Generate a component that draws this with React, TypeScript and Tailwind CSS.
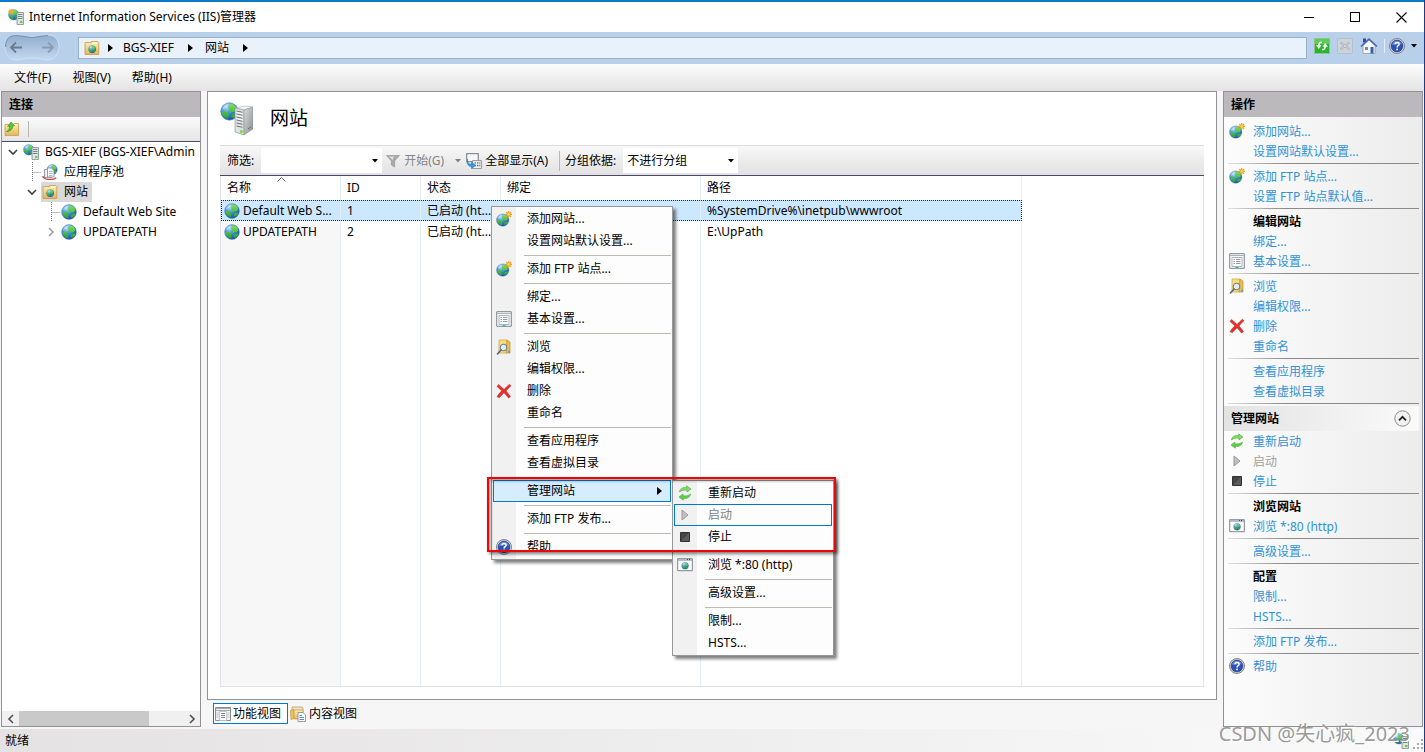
import type { ReactNode } from "react";

/* ---------- icons ---------- */

function Defs() {
  return (
    <svg width="0" height="0" className="absolute" aria-hidden="true">
      <defs>
        <radialGradient id="sea" cx="0.35" cy="0.25" r="0.85">
          <stop offset="0" stopColor="#b5dcfc" />
          <stop offset="0.4" stopColor="#4a90e2" />
          <stop offset="1" stopColor="#123f9c" />
        </radialGradient>
        <linearGradient id="land" x1="0" y1="0" x2="0" y2="1">
          <stop offset="0" stopColor="#7fe05c" />
          <stop offset="1" stopColor="#22a52e" />
        </linearGradient>
        <linearGradient id="folder" x1="0" y1="0" x2="0" y2="1">
          <stop offset="0" stopColor="#fdf0b4" />
          <stop offset="1" stopColor="#e3b65a" />
        </linearGradient>
        <linearGradient id="metal" x1="0" y1="0" x2="1" y2="1">
          <stop offset="0" stopColor="#d6d9d9" />
          <stop offset="1" stopColor="#8b9292" />
        </linearGradient>
        <linearGradient id="pill" x1="0" y1="0" x2="0" y2="1">
          <stop offset="0" stopColor="#92aecb" />
          <stop offset="0.5" stopColor="#a9c2de" />
          <stop offset="1" stopColor="#c6daf0" />
        </linearGradient>
      </defs>
    </svg>
  );
}

function GlobeShape() {
  return (
    <>
      <circle cx="8" cy="8" r="7.4" fill="url(#sea)" stroke="#5f86b8" strokeWidth="0.5" />
      <path
        d="M8 1.300c2.600 0 4.600 1.200 5.800 3.200l.2 2.300-1.600 1.800-2.200-.4L9 9.300 7.200 8.200l.4-2.400L6.600 4l1.600-1zM1.300 8.400l2.600-1 2.400 1.800 1.300 2.400-.8 2.600-2.400-.8C2.600 12.200 1.500 10.400 1.300 8.400zM10 10.800l3.200-1.200 1.200.6c-.6 1.500-1.600 2.800-3 3.600L9.600 13z"
        fill="url(#land)"
      />
      <path d="M2 6.500C2.500 3.500 5 1.500 8 1.500c-1 2-3 4-6 5z" fill="#fff" opacity="0.350" />
    </>
  );
}

function Globe() {
  return (
    <svg width="16" height="16" viewBox="0 0 16 16">
      <GlobeShape />
    </svg>
  );
}

function GlobeNew() {
  return (
    <svg width="16" height="16" viewBox="0 0 16 16">
      <g transform="translate(0 2.4) scale(0.84)">
        <GlobeShape />
      </g>
      <path d="M12.7 0v6.8M9.3 3.4h6.8M10.3 1l4.8 4.8M15.1 1l-4.8 4.8" stroke="#f0a020" strokeWidth="1.2" />
      <circle cx="12.7" cy="3.4" r="1.3" fill="#ffd34d" />
    </svg>
  );
}

function ServerLarge() {
  return (
    <svg width="33" height="33" viewBox="0 0 33 33">
      <g transform="scale(1.180)">
        <GlobeShape />
      </g>
      <path d="m15 6 10-2 8 1-9 3z" fill="#f4f5f5" stroke="#9aa0a0" strokeWidth="0.5" />
      <path d="m15 6 9 2v25l-9-3z" fill="#dfe2e2" stroke="#868d8d" strokeWidth="0.6" />
      <path d="m24 8 9-3v22l-9 6z" fill="url(#metal)" stroke="#868d8d" strokeWidth="0.5" />
      <path d="m16.500 9 6 1.300M16.500 12l6 1.300M16.500 15l6 1.300M16.500 18l6 1.300M16.500 21l6 1.300M16.500 24l6 1.300" stroke="#6d7474" strokeWidth="1" />
      <path d="m16.500 10.500 6 1.300M16.500 13.500l6 1.300M16.500 16.500l6 1.300" stroke="#fff" strokeWidth="0.8" />
      <path d="m28 27 3-2" stroke="#6a7171" />
      <circle cx="21.300" cy="29.600" r="1.500" fill="#6be02c" />
    </svg>
  );
}

function ServerSmall({ star = false }: { star?: boolean }) {
  return (
    <svg width="16" height="16" viewBox="0 0 16 16">
      <g transform="scale(0.720)">
        <GlobeShape />
      </g>
      <path d="M9 3.500h6.500v12H9z" fill="#dfe4e7" stroke="#7f898f" strokeWidth="0.8" />
      <path d="M10 5.500h4.500M10 7.500h4.500M10 9.500h4.500" stroke="#6c7880" strokeWidth="0.9" />
      <path d="M12 13h2.500" stroke="#55cf2a" strokeWidth="1.800" />
      {star && (
        <path d="M3 0v5.500M.2 2.800h5.600M1 .8l4 4M5 .8l-4 4" stroke="#f3a81f" strokeWidth="1.100" />
      )}
    </svg>
  );
}

function FolderGlobe() {
  return (
    <svg width="16" height="16" viewBox="0 0 16 16">
      <path d="M1 2.500h6.500V1.500H14l.8 1v12H1z" fill="url(#folder)" stroke="#c79a45" strokeWidth="0.8" />
      <path d="M9 3.200h4" stroke="#fff" strokeWidth="1" />
      <g transform="translate(4.200 5.200) scale(0.5)">
        <GlobeShape />
      </g>
    </svg>
  );
}

function FolderUp() {
  return (
    <svg width="16" height="16" viewBox="0 0 16 16">
      <path d="M1 3.500h8l1-1h4.500v12H1z" fill="url(#folder)" stroke="#c9a046" strokeWidth="0.8" />
      <path d="M2.500 10.500C4.500 9.500 5.500 8 5.600 5.200L3.600 5.400 7 1l3.600 3.800-1.900.1C8.500 8.500 6.500 10.500 2.500 10.500z" fill="#56c836" stroke="#2d8c1e" strokeWidth="0.6" />
    </svg>
  );
}

function AppPool() {
  return (
    <svg width="16" height="16" viewBox="0 0 16 16">
      <g transform="translate(4.500 0) scale(0.7)">
        <GlobeShape />
      </g>
      <path d="M2.500 5.500h7v8h-7z" fill="#eef2f6" stroke="#7d8b99" strokeWidth="0.8" />
      <path d="M5.500 4h4l2.500 2.500V13H5.500z" fill="#fff" stroke="#7d8b99" strokeWidth="0.8" />
      <path d="M7 7.500h3.500M7 9.500h3.500M7 11.500h3.500" stroke="#91a3b5" strokeWidth="0.8" />
      <path d="M.8 12c.6 4 10 4.400 13.400 1.800" fill="none" stroke="#c4473f" strokeWidth="1.400" />
    </svg>
  );
}

function SettingsSheet() {
  return (
    <svg width="16" height="16" viewBox="0 0 16 16">
      <path d="M.7.7h14.600v14.600H.7z" fill="#f7f8f9" stroke="#7e868d" />
      <path d="M1.200 2.500h13.600" stroke="#aab1b7" />
      <path d="M3 4.500h10v9H3z" fill="#fff" stroke="#9ba3aa" strokeWidth="0.8" />
      <path d="M4.500 6.500h1.500M7 6.500h4.500M4.500 8.500h1.500M7 8.500h4.500M4.500 10.500h1.500M7 10.500h4.500" stroke="#8a939b" strokeWidth="0.9" />
      <path d="M6.500 14.500h3" stroke="#28b6d8" strokeWidth="1.200" />
    </svg>
  );
}

function FolderSearch() {
  return (
    <svg width="16" height="16" viewBox="0 0 16 16">
      <path d="M3 1h8v13H3z" fill="#f6dc7e" stroke="#cfa53c" strokeWidth="0.7" />
      <path d="m11 1 3 2v11h-4z" fill="#e9be4d" stroke="#c1922a" strokeWidth="0.7" />
      <path d="M13 11.500v2.500" stroke="#3a9fe0" strokeWidth="1.200" />
      <circle cx="7.500" cy="8.500" r="3.200" fill="#dcedf9" stroke="#75818c" strokeWidth="1.100" />
      <path d="M5 11 1.500 15" stroke="#5c6873" strokeWidth="1.600" strokeLinecap="round" />
    </svg>
  );
}

function DeleteCross() {
  return (
    <svg width="16" height="16" viewBox="0 0 16 16">
      <path
        d="M2.500 1.500C5 3.500 6.500 5 8 6.400 9.800 4.500 11.500 2.800 13.500 1.200l1.500 1.600c-2 1.600-3.600 3.400-5 5.200 1.800 2 3.300 3.800 4.500 5.600l-2 1.400C11 13 9.600 11.400 8 9.800c-1.600 1.800-3.200 3.500-4.800 5L1 13.600c1.400-2 3-4 4.800-5.800C4 6.200 2.500 4.800 1 3.400z"
        fill="#e5322e"
        stroke="#b51f1b"
        strokeWidth="0.5"
      />
    </svg>
  );
}

function Recycle() {
  return (
    <svg width="16" height="16" viewBox="0 0 16 16">
      <path d="M2.500 7C2.800 3.600 6 2 9.800 2.600L9.600.8 14 4l-4 3V5.200C7 4.800 4.500 5.200 2.500 7z" fill="#7fdc66" stroke="#45ad35" strokeWidth="0.6" />
      <path d="M13.500 9c-.3 3.400-3.500 5-7.300 4.400l.2 1.800L2 12l4-3v1.800c3 .4 5.500 0 7.500-1.800z" fill="#62cc4a" stroke="#45ad35" strokeWidth="0.6" />
    </svg>
  );
}

function StartIcon() {
  return (
    <svg width="16" height="16" viewBox="0 0 16 16">
      <path d="M5 3v10l6-5z" fill="#c0c0c0" stroke="#989898" />
    </svg>
  );
}

function StopIcon() {
  return (
    <svg width="16" height="16" viewBox="0 0 16 16">
      <path d="M3.500 3.500h9v9h-9z" fill="#454545" stroke="#303030" />
      <path d="M4 12 12 4v8z" fill="#5c5c5c" />
    </svg>
  );
}

function BrowseWindow() {
  return (
    <svg width="16" height="16" viewBox="0 0 16 16">
      <path d="M.7 1.700h14.600v12H.7z" fill="#fcfcfd" stroke="#7d8590" />
      <path d="M1 3h14" stroke="#9fb0c6" strokeWidth="1.600" />
      <path d="M10 2.500h1M12 2.500h1" stroke="#3c4c63" />
      <g transform="translate(4.300 5) scale(0.47)">
        <GlobeShape />
      </g>
    </svg>
  );
}

function HelpIcon() {
  return (
    <svg width="16" height="16" viewBox="0 0 16 16">
      <circle cx="8" cy="8" r="7.500" fill="#d7d9dd" stroke="#777b84" strokeWidth="0.9" />
      <circle cx="8" cy="8" r="5.900" fill="#2a52b8" stroke="#14307c" strokeWidth="0.6" />
      <path d="M3 6.500a5.200 5.200 0 0 1 10 0C10 5.600 6 7.500 3 6.500z" fill="#7f9fe4" opacity="0.7" />
      <path d="M6 6.300c.1-2.600 4.200-2.400 4.100-.1C10.100 7.700 8.100 7.700 8.100 9.400" fill="none" stroke="#fff" strokeWidth="1.500" />
      <circle cx="8.100" cy="11.400" r="0.950" fill="#fff" />
    </svg>
  );
}

function RefreshIcon() {
  return (
    <svg width="16" height="16" viewBox="0 0 16 16">
      <path d="M.5.5h15v15H.5z" fill="#28b52c" stroke="#8fc08f" />
      <path d="M1 1h14v5H1z" fill="#7fdc72" opacity="0.6" />
      <path d="M8 4.500C6 4 4.800 5 4.800 8M8 11.500c2 .5 3.200-.5 3.200-3.500" fill="none" stroke="#fff" strokeWidth="1.600" />
      <path d="M2 7.300h5.500L4.800 11zM14 8.700H8.500L11.200 5z" fill="#fff" />
    </svg>
  );
}

function CancelIcon() {
  return (
    <svg width="16" height="16" viewBox="0 0 16 16">
      <path d="M.5.500h15v15H.5z" fill="#ccd3da" stroke="#b6c0ca" />
      <path d="m3.500 4.500 9 7M12.500 4.500l-9 7" stroke="#9aa5b0" strokeWidth="2" />
      <path d="m3.500 4.500 9 7M12.500 4.500l-9 7" stroke="#e6eaee" strokeWidth="0.8" />
    </svg>
  );
}

function HomeIcon() {
  return (
    <svg width="18" height="18" viewBox="0 0 18 18">
      <path d="M3 1.500h3v4H3z" fill="#2a49c4" />
      <path d="M3 8.500 9 3l6 5.500V16.500H3z" fill="#f4f5f7" stroke="#8b919b" strokeWidth="0.7" />
      <path d="M1 9.500 9 2l8 7.500" fill="none" stroke="#4b63a8" strokeWidth="1.600" />
      <path d="M5 10h3v3H5z" fill="#7d8796" />
      <path d="M10.500 10h3v6.500h-3z" fill="#2f62b8" />
    </svg>
  );
}

function FunnelIcon() {
  return (
    <svg width="14" height="14" viewBox="0 0 14 14">
      <path d="M.5 1.500h13L8.600 7v6L5.400 11V7z" fill="#a9a9a9" stroke="#9a9a9a" strokeWidth="0.7" />
      <path d="M3 2.500h5L6.500 6z" fill="#dedede" />
    </svg>
  );
}

function ShowAllIcon() {
  return (
    <svg width="16" height="16" viewBox="0 0 16 16">
      <path d="M.7.7h11.600v8H.7z" fill="#f7f7f8" stroke="#8e9298" strokeWidth="1.300" />
      <path d="M6.500 7.500h9v8h-9z" fill="#eceef1" stroke="#8e9298" strokeWidth="0.9" />
      <path d="M8.500 9.800h1.300M11 9.800h1.300M13.300 9.800h1M8.500 12.500h1.300M11 12.500h1.300M13.300 12.500h1" stroke="#5a6270" strokeWidth="1.300" />
      <path d="M1.500 6c0 4 1.500 5.200 4 5.200V9l4 3.400-4 3.300v-2.200C2 13.500.5 10.500 1.500 6z" fill="#2f9be0" stroke="#1b6fac" strokeWidth="0.5" />
    </svg>
  );
}

function FeatureViewIcon() {
  return (
    <svg width="16" height="16" viewBox="0 0 16 16">
      <path d="M.5 1.500h15v13H.5z" fill="#f3f4f5" stroke="#8b8f94" />
      <path d="M1 2.500h14M1 4.500h14" stroke="#a4a8ad" />
      <path d="M1.500 7h2M1.500 9h2M1.500 11h2M12.500 7h2M12.500 9h2M12.500 11h2" stroke="#b4b8bd" />
      <path d="M4.500 5.500h7v9h-7z" fill="#fff" stroke="#b4b8bd" strokeWidth="0.8" />
      <path d="M6 7.500h4M6 9.500h4M6 11.500h4" stroke="#6d737a" strokeWidth="0.9" />
    </svg>
  );
}

function ContentViewIcon() {
  return (
    <svg width="16" height="16" viewBox="0 0 16 16">
      <path d="M2 1h10l1 1v9H2z" fill="#ede3c2" stroke="#a89a6e" strokeWidth="0.7" />
      <path d="M.5 4.500 4 3.500v9l-3 1z" fill="#f1c35d" stroke="#c39439" strokeWidth="0.7" />
      <path d="M4 4h9v9H4z" fill="url(#folder)" stroke="#c79a45" strokeWidth="0.7" />
      <path d="M8 6.500h5l2.500 2.500v6.500H8z" fill="#fff" stroke="#7b8794" strokeWidth="0.8" />
      <path d="M9.500 9.500H12M9.500 11.500H14M9.500 13.500H14" stroke="#3f7fc9" strokeWidth="0.9" />
    </svg>
  );
}

function Arrow({ dir, className = "" }: { dir: "right" | "down"; className?: string }) {
  return dir === "right" ? (
    <svg width="5" height="8" viewBox="0 0 5 8" className={className}>
      <path d="M0 0v8l5-4z" fill="currentColor" />
    </svg>
  ) : (
    <svg width="6" height="4" viewBox="0 0 6 4" className={className}>
      <path d="M0 0h6L3 3.500z" fill="currentColor" />
    </svg>
  );
}

function Chevron({ dir }: { dir: "down" | "left" | "right" }) {
  const paths = { down: "m1 3 4 4 4-4", left: "M7 1 3 5l4 4", right: "m3 1 4 4-4 4" };
  return (
    <svg width="10" height="10" viewBox="0 0 10 10">
      <path d={paths[dir]} fill="none" stroke="currentColor" strokeWidth="1.600" />
    </svg>
  );
}

/* ---------- title, address and menu bars ---------- */

function TitleBar() {
  return (
    <header className="flex h-8 items-center border-t-2 border-[#0a7ac8] bg-white pl-2">
      <ServerSmall star />
      <h1 className="ml-[5px] flex-1">Internet Information Services (IIS)管理器</h1>
      <button aria-label="最小化" className="flex h-full w-[46px] items-center justify-center">
        <span className="h-px w-[10px] bg-black" />
      </button>
      <button aria-label="最大化" className="flex h-full w-[46px] items-center justify-center">
        <span className="size-[10px] border border-black" />
      </button>
      <button aria-label="关闭" className="flex h-full w-[46px] items-center justify-center">
        <svg width="11" height="11" viewBox="0 0 11 11">
          <path d="m.5.5 10 10M10.500.5l-10 10" stroke="#000" strokeWidth="1.100" />
        </svg>
      </button>
    </header>
  );
}

function AddressBar() {
  return (
    <nav className="flex h-8 items-center bg-[#b9d0ea] pl-1 pr-[7px]">
      <svg width="56" height="28" viewBox="0 0 56 28" className="shrink-0">
        <path
          d="M12 1c6 0 9 2 16 2s10-2 16-2c7 0 11 5 11 11.500S51 26 44 26c-5 0-9-2-16-2s-11 2-16 2C5 26 1 20 1 13S5 1 12 1z"
          fill="url(#pill)"
          stroke="#d2e1f2"
        />
        <path d="M1.500 13C1.500 6 5 1.500 12 1.500c6 0 9 2 16 2s10-2 16-2" fill="none" stroke="#7894b4" strokeWidth="1.200" />
        <path d="M18 13.500H7M12 8.500 7 13.500l5 5" fill="none" stroke="#6a7c92" strokeWidth="1.800" />
        <path d="M38 13.500h11M44 8.500l5 5-5 5" fill="none" stroke="#8a9cb3" strokeWidth="1.800" />
      </svg>
      <div className="ml-[18px] flex h-[22px] flex-1 items-center border border-[#98b0cc] bg-[#e9f1fb] pl-[5px]">
        <FolderGlobe />
        <Arrow dir="right" className="ml-2" />
        <a href="#server" className="ml-[10px]">BGS-XIEF</a>
        <Arrow dir="right" className="ml-[14px]" />
        <a href="#sites" className="ml-3">网站</a>
        <Arrow dir="right" className="ml-[14px]" />
      </div>
      <div className="flex items-center pb-1 pl-[7px]">
        <button aria-label="刷新"><RefreshIcon /></button>
        <button aria-label="停止加载" className="ml-[7px]"><CancelIcon /></button>
        <button aria-label="主页" className="ml-[7px]"><HomeIcon /></button>
        <span className="ml-[6px] h-[14px] w-px bg-[#e4edf8]" />
        <button aria-label="帮助菜单" className="ml-[4px] flex items-center gap-[6px]">
          <HelpIcon />
          <Arrow dir="down" />
        </button>
      </div>
    </nav>
  );
}

function MenuBar() {
  return (
    <div className="flex h-[27px] items-center gap-[21px] bg-linear-to-b from-[#fdfdfd] to-[#e4e2e2] pl-[14px]">
      {["文件(F)", "视图(V)", "帮助(H)"].map((label) => (
        <button key={label}>{label}</button>
      ))}
    </div>
  );
}

/* ---------- connections tree ---------- */

type TreeNode = {
  label: string;
  icon: ReactNode;
  depth: number;
  state?: "open" | "closed";
  selected?: boolean;
};

const tree: TreeNode[] = [
  { label: "BGS-XIEF (BGS-XIEF\\Admin", icon: <ServerSmall />, depth: 0, state: "open" },
  { label: "应用程序池", icon: <AppPool />, depth: 1 },
  { label: "网站", icon: <FolderGlobe />, depth: 1, state: "open", selected: true },
  { label: "Default Web Site", icon: <Globe />, depth: 2 },
  { label: "UPDATEPATH", icon: <Globe />, depth: 2, state: "closed" },
];

function TreeRow({ node }: { node: TreeNode }) {
  return (
    <li className="flex h-5 items-center whitespace-nowrap">
      {Array.from({ length: node.depth }, (_, i) => (
        <span key={i} className="w-[19px] shrink-0" />
      ))}
      <span className="flex h-5 w-[19px] shrink-0 items-center justify-center">
        {node.state ? (
          <span className={node.state === "open" ? "text-[#404040]" : "text-[#a0a0a0]"}>
            <Chevron dir={node.state === "open" ? "down" : "right"} />
          </span>
        ) : (
          <svg width="19" height="20" viewBox="0 0 19 20">
            <path d="M10.500 0v20M10.500 10.500H19" fill="none" stroke="#808080" strokeDasharray="1 1" />
          </svg>
        )}
      </span>
      <button className={`flex h-5 items-center pl-px ${node.selected ? "bg-[#d9d9d9] pr-1" : ""}`}>
        <span className="mr-[6px] shrink-0">{node.icon}</span>
        {node.label}
      </button>
    </li>
  );
}

function Connections() {
  return (
    <aside className="flex w-[200px] shrink-0 flex-col border border-[#929296] bg-white">
      <h2 className="flex h-[25px] items-center bg-[#bbb9bb] pl-[7px] font-bold">连接</h2>
      <div className="flex h-[25px] items-center border-b border-[#4a4867] bg-linear-to-b from-[#fbfbfb] to-[#e6e4e4] pl-[2px]">
        <button aria-label="向上"><FolderUp /></button>
        <span className="ml-2 h-4 w-px bg-[#b9b7ab]" />
      </div>
      <ul className="flex-1 overflow-hidden pl-px">
        {tree.map((node) => (
          <TreeRow key={node.label} node={node} />
        ))}
      </ul>
      <div className="flex h-[15px] items-center bg-[#f0f0f0] text-[#505050]">
        <button aria-label="向左滚动" className="flex w-[17px] justify-center"><Chevron dir="left" /></button>
        <span className="h-full w-[130px] bg-[#c9c9c9]" />
        <span className="flex-1" />
        <button aria-label="向右滚动" className="flex w-[17px] justify-center"><Chevron dir="right" /></button>
      </div>
    </aside>
  );
}

/* ---------- sites list ---------- */

const sites = [
  { name: "Default Web S...", id: "1", state: "已启动 (ht...", path: "%SystemDrive%\\inetpub\\wwwroot", selected: true },
  { name: "UPDATEPATH", id: "2", state: "已启动 (ht...", path: "E:\\UpPath", selected: false },
];

function FilterBar() {
  return (
    <div className="flex h-[31px] items-center whitespace-nowrap border-b border-t border-b-[#4a4867] border-t-[#dcdcdc] bg-linear-to-b from-[#f8f8f8] to-[#e3e1e2] pl-[7px]">
      <label htmlFor="filter">筛选:</label>
      <div className="ml-[7px] flex h-[25px] w-[121px] items-center bg-white">
        <input id="filter" className="h-4 w-full min-w-0 flex-1 px-1 outline-none" />
        <button aria-label="筛选历史" className="px-[4px]"><Arrow dir="down" /></button>
      </div>
      <button className="ml-[4px] flex items-center gap-1 text-[#838383]">
        <FunnelIcon />
        开始(G)
        <Arrow dir="down" className="ml-[7px]" />
      </button>
      <button className="ml-[5px] flex items-center gap-[3px]">
        <ShowAllIcon />
        全部显示(A)
      </button>
      <span className="ml-[11px] h-5 w-px bg-[#bdb9a6]" />
      <label htmlFor="group" className="ml-[5px]">分组依据:</label>
      <div className="relative ml-[7px] h-[25px] w-[115px] bg-white">
        <select id="group" className="h-full w-full appearance-none pl-1 outline-none">
          <option>不进行分组</option>
        </select>
        <Arrow dir="down" className="pointer-events-none absolute right-1 top-[11px]" />
      </div>
    </div>
  );
}

function SitesTable() {
  const cell = "border-r border-[#e5eef8] p-0 pl-[6px] text-left font-normal";
  return (
    <div className="flex flex-1 border border-t-0 border-[#dfe3e8]">
      <table className="w-[801px] table-fixed border-separate border-spacing-0">
        <colgroup>
          <col className="w-[120px]" />
          <col className="w-[80px]" />
          <col className="w-[80px]" />
          <col className="w-[200px]" />
          <col />
        </colgroup>
        <thead>
          <tr className="h-6">
            <th className={`${cell} relative`}>
              名称
              <svg width="9" height="5" viewBox="0 0 9 5" className="absolute left-[56px] top-px">
                <path d="m.5 4.500 4-4 4 4" fill="none" stroke="#666" />
              </svg>
            </th>
            <th className={cell}>ID</th>
            <th className={cell}>状态</th>
            <th className={cell}>绑定</th>
            <th className={cell}>路径</th>
          </tr>
        </thead>
        <tbody>
          {sites.map((site) => (
            <tr
              key={site.id}
              className={`h-[21px] whitespace-nowrap ${
                site.selected ? "bg-[#cce8ff] outline-1 -outline-offset-1 outline-dotted outline-[#222]" : ""
              }`}
            >
              <td className={`${cell} ${site.selected ? "" : "bg-[#f7f7f7]"}`}>
                <span className="-ml-[3px] flex items-center gap-[3px]">
                  <Globe />
                  {site.name}
                </span>
              </td>
              <td className={cell}>{site.id}</td>
              <td className={cell}>{site.state}</td>
              <td className={cell} />
              <td className={cell}>{site.path}</td>
            </tr>
          ))}
          <tr>
            <td className={`${cell} bg-[#f7f7f7]`} />
            <td className={cell} />
            <td className={cell} />
            <td className={cell} />
            <td className={cell} />
          </tr>
        </tbody>
      </table>
    </div>
  );
}

function Workspace() {
  return (
    <main className="flex min-w-0 flex-1 flex-col">
      <section className="flex flex-1 flex-col border border-[#929296] bg-white px-3 pb-3">
        <div className="flex h-[53px] items-center pb-px">
          <ServerLarge />
          <h2 className="ml-[17px] text-[19px]">网站</h2>
        </div>
        <FilterBar />
        <SitesTable />
      </section>
      <div className="flex h-[27px] items-center gap-[2px] pl-[6px]">
        <button className="flex h-[21px] items-center gap-[2px] border border-[#0078d7] bg-white pl-px pr-[6px]">
          <FeatureViewIcon />
          功能视图
        </button>
        <button className="flex h-[21px] items-center gap-[3px]">
          <ContentViewIcon />
          内容视图
        </button>
      </div>
    </main>
  );
}

/* ---------- actions pane ---------- */

type Entry = {
  label?: string;
  icon?: ReactNode;
  kind?: "item" | "sep" | "title";
  disabled?: boolean;
};

const sep: Entry = { kind: "sep" };

const editActions: Entry[] = [
  { label: "添加网站...", icon: <GlobeNew /> },
  { label: "设置网站默认设置..." },
  sep,
  { label: "添加 FTP 站点...", icon: <GlobeNew /> },
  { label: "设置 FTP 站点默认值..." },
  sep,
  { label: "编辑网站", kind: "title" },
  { label: "绑定..." },
  { label: "基本设置...", icon: <SettingsSheet /> },
  sep,
  { label: "浏览", icon: <FolderSearch /> },
  { label: "编辑权限..." },
  { label: "删除", icon: <DeleteCross /> },
  { label: "重命名" },
  sep,
  { label: "查看应用程序" },
  { label: "查看虚拟目录" },
  sep,
];

const manageActions: Entry[] = [
  { label: "重新启动", icon: <Recycle /> },
  { label: "启动", icon: <StartIcon />, disabled: true },
  { label: "停止", icon: <StopIcon /> },
  sep,
  { label: "浏览网站", kind: "title" },
  { label: "浏览 *:80 (http)", icon: <BrowseWindow /> },
  sep,
  { label: "高级设置..." },
  sep,
  { label: "配置", kind: "title" },
  { label: "限制..." },
  { label: "HSTS..." },
  sep,
  { label: "添加 FTP 发布..." },
  sep,
  { label: "帮助", icon: <HelpIcon /> },
];

function ActionList({ entries }: { entries: Entry[] }) {
  return (
    <ul>
      {entries.map((entry, i) =>
        entry.kind === "sep" ? (
          <li key={i} className="flex h-[5px] items-center pl-1 pr-[3px]">
            <span className="h-px flex-1 bg-linear-to-r from-[#e0e0e0] via-[#8a8a8a] via-30% to-[#8a8a8a]" />
          </li>
        ) : (
          <li key={i} className="flex h-5 items-end pl-[5px]">
            <span className="mr-2 w-4 shrink-0 self-center">{entry.icon}</span>
            {entry.kind === "title" ? (
              <h3 className="pb-px font-bold">{entry.label}</h3>
            ) : entry.disabled ? (
              <span className="pb-px text-[#a0a0a0]">{entry.label}</span>
            ) : (
              <a href="#action" className="pb-px text-[#2f93d6]">{entry.label}</a>
            )}
          </li>
        ),
      )}
    </ul>
  );
}

function Actions() {
  return (
    <aside className="flex w-[200px] shrink-0 flex-col border border-[#929296] bg-linear-to-r from-[#fcfcfc] to-[#ececec]">
      <h2 className="mb-1 flex h-[25px] items-center bg-[#bbb9bb] pl-[7px] font-bold">操作</h2>
      <ActionList entries={editActions} />
      <div className="mr-[3px] flex h-[25px] items-center justify-between bg-linear-to-r from-[#e3e3e3] to-[#fafafa] pl-[7px] pr-2">
        <h2 className="font-bold">管理网站</h2>
        <button aria-label="折叠">
          <svg width="17" height="17" viewBox="0 0 17 17">
            <circle cx="8.500" cy="8.500" r="7.700" fill="#f1f1f1" stroke="#8b8b8b" />
            <path d="m5 10.300 3.500-3.500 3.500 3.500" fill="none" stroke="#222" strokeWidth="1.800" />
          </svg>
        </button>
      </div>
      <ActionList entries={manageActions} />
    </aside>
  );
}

/* ---------- context menus ---------- */

type MenuEntry = Entry & { submenu?: boolean; outlined?: boolean };

const contextMenu: MenuEntry[] = [
  { label: "添加网站...", icon: <GlobeNew /> },
  { label: "设置网站默认设置..." },
  sep,
  { label: "添加 FTP 站点...", icon: <GlobeNew /> },
  sep,
  { label: "绑定..." },
  { label: "基本设置...", icon: <SettingsSheet /> },
  sep,
  { label: "浏览", icon: <FolderSearch /> },
  { label: "编辑权限..." },
  { label: "删除", icon: <DeleteCross /> },
  { label: "重命名" },
  sep,
  { label: "查看应用程序" },
  { label: "查看虚拟目录" },
  sep,
  { label: "管理网站", submenu: true },
  sep,
  { label: "添加 FTP 发布..." },
  sep,
  { label: "帮助", icon: <HelpIcon /> },
];

const siteMenu: MenuEntry[] = [
  { label: "重新启动", icon: <Recycle /> },
  { label: "启动", icon: <StartIcon />, disabled: true, outlined: true },
  { label: "停止", icon: <StopIcon /> },
  sep,
  { label: "浏览 *:80 (http)", icon: <BrowseWindow /> },
  sep,
  { label: "高级设置..." },
  sep,
  { label: "限制..." },
  { label: "HSTS..." },
];

function PopupMenu({ entries, className }: { entries: MenuEntry[]; className: string }) {
  return (
    <ul
      role="menu"
      className={`absolute border border-[#979797] bg-linear-to-r from-[#f1f1f1] from-[24px] to-[#fdfdfd] to-[24px] p-px shadow-[3px_3px_3px_rgba(0,0,0,0.5)] ${className}`}
    >
      {entries.map((entry, i) =>
        entry.kind === "sep" ? (
          <li key={i} role="separator" className="flex h-[6px] items-center pl-[31px]">
            <span className="h-px flex-1 bg-[#bdbbb0]" />
          </li>
        ) : (
          <li key={i} role="none">
            <button
              role="menuitem"
              disabled={entry.disabled}
              className={`flex h-[22px] w-full items-center border pl-[2px] pr-2 ${
                entry.submenu
                  ? "border-[#0078d7] bg-[#d5edff]"
                  : entry.outlined
                    ? "border-[#0078d7]"
                    : "border-transparent"
              } ${entry.disabled ? "text-[#838383]" : ""}`}
            >
              <span className="mr-[15px] w-4 shrink-0">{entry.icon}</span>
              <span className="flex-1 text-left">{entry.label}</span>
              {entry.submenu && <Arrow dir="right" />}
            </button>
          </li>
        ),
      )}
    </ul>
  );
}

/* ---------- window ---------- */

export default function App() {
  return (
    <div className="relative flex min-h-screen flex-col overflow-hidden border-r border-[#1c3a86] bg-[#f6f6f6] font-['Noto_Sans','Noto_Sans_CJK_SC',sans-serif] text-[12px] leading-4 text-black [&_svg]:block">
      <Defs />
      <TitleBar />
      <AddressBar />
      <MenuBar />
      <div className="flex flex-1 gap-[6px] pb-[2px] pl-px pr-px">
        <Connections />
        <Workspace />
        <Actions />
      </div>
      <footer className="flex h-[23px] items-center justify-between bg-linear-to-r from-[#e4e2e2] to-[#fafafa] pl-[5px] pr-px">
        <span>就绪</span>
        <span className="flex items-end gap-1">
          <ServerSmall />
          <svg width="10" height="10" viewBox="0 0 10 10">
            <path d="M8 0h2v2H8zM4 4h2v2H4zM8 4h2v2H8zM0 8h2v2H0zM4 8h2v2H4zM8 8h2v2H8z" fill="#a8a8a8" />
          </svg>
        </span>
      </footer>

      <PopupMenu entries={contextMenu} className="left-[491px] top-[206px] w-[182px]" />
      <PopupMenu entries={siteMenu} className="left-[672px] top-[480px] w-[162px]" />
      <div className="pointer-events-none absolute left-[487px] top-[477px] h-[75px] w-[349px] border-2 border-[#f00505] shadow-[2px_2px_3px_rgba(0,0,0,0.5),inset_2px_2px_3px_rgba(0,0,0,0.35)]" />
      <p className="pointer-events-none absolute bottom-[6px] right-[14px] text-[20px] leading-6 text-[#8e8e8e]/90 [text-shadow:1px_1px_0_#fff]">
        CSDN @失心疯_2023
      </p>
    </div>
  );
}
